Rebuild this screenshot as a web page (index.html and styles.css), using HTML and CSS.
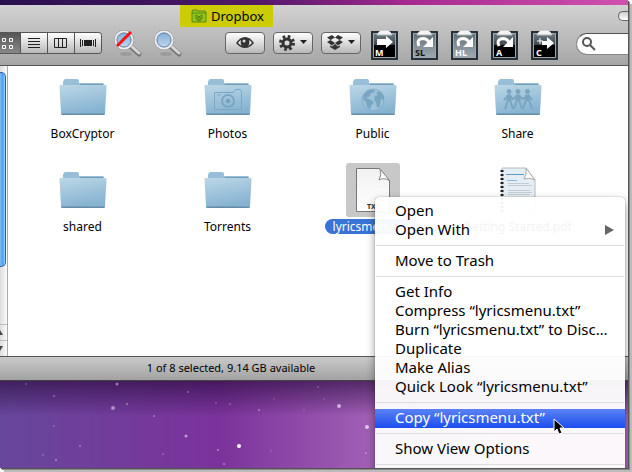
FILE: index.html
```html
<!DOCTYPE html>
<html lang="en">
<head>
    <meta charset="UTF-8">
    <meta name="viewport" content="width=device-width, initial-scale=1.0">
    <title>Dropbox</title>
    <link rel="stylesheet" href="styles.css">
</head>
<body>
    <!-- shared shapes -->
    <svg class="defs" width="0" height="0" aria-hidden="true">
        <defs>
            <linearGradient id="folder-front" x1="0" y1="0" x2="0.3" y2="1">
                <stop offset="0" stop-color="#bcd7e6"/>
                <stop offset="1" stop-color="#86b3d2"/>
            </linearGradient>
            <linearGradient id="lens" x1="0" y1="0" x2="0" y2="1">
                <stop offset="0" stop-color="#7ea9d3"/>
                <stop offset="1" stop-color="#c3dcf2"/>
            </linearGradient>
            <linearGradient id="clip-dark" x1="0" y1="0" x2="0" y2="1">
                <stop offset="0" stop-color="#77858d"/>
                <stop offset="0.5" stop-color="#39434a"/>
                <stop offset="0.5" stop-color="#000"/>
            </linearGradient>
            <linearGradient id="clip-light" x1="0" y1="0" x2="0" y2="1">
                <stop offset="0" stop-color="#5d6b73"/>
                <stop offset="1" stop-color="#a4afb5"/>
            </linearGradient>
            <linearGradient id="paper" x1="0" y1="0" x2="0" y2="1">
                <stop offset="0" stop-color="#f1f1f1"/>
                <stop offset="1" stop-color="#fff"/>
            </linearGradient>
            <symbol id="folder" viewBox="0 0 48 36">
                <path d="M4 8V3q0-1 1-2l1-1h12q2 0 2 2v2h24q1 0 1 2v4H3z" fill="#98bfd7"/>
                <path d="M21 5h23v1H21z" fill="#6f9cb9"/>
                <path d="M1 6h45q2 0 1.500 2L46 34q0 2-1.500 2h-41Q2 36 2 34L.500 8Q.500 6 1 6z" fill="url(#folder-front)"/>
                <path d="M2 34.500h44q0 1.500-2 1.500H4q-2 0-2-1.500z" fill="#668ba6"/>
            </symbol>
            <symbol id="magnifier" viewBox="0 0 30 30">
                <ellipse cx="13" cy="25" rx="6" ry="2" fill="#8a8a8a" opacity="0.5"/>
                <path d="M17 17l9 8" stroke="#777" stroke-width="5" stroke-linecap="round"/>
                <path d="M17 16l9 8" stroke="#d6d6d6" stroke-width="3" stroke-linecap="round"/>
                <circle cx="11" cy="11" r="8.500" fill="url(#lens)" stroke="#8b9095" stroke-width="3"/>
                <circle cx="11" cy="11" r="8.500" fill="none" stroke="#edf0f2" stroke-width="2"/>
                <circle cx="11" cy="11" r="7" fill="none" stroke="#6f90b0" stroke-width="1"/>
            </symbol>
            <symbol id="clip" viewBox="0 0 27 31">
                <path d="M1 3h25v27H1z" fill="none" stroke="#27313a" stroke-width="2"/>
                <path d="M2.500 4.500h22v24h-22z" fill="none" stroke="#9ca6ac"/>
                <path d="M6 5l2-2 2-2h7l2 2 2 2v1H6z" fill="#f4f4f4" stroke="#b4babd"/>
            </symbol>
            <symbol id="redo" viewBox="0 0 17 12">
                <path d="M3 10Q0 3 7 2.500q4 0 6 4" fill="none" stroke="#fff" stroke-width="3"/>
                <path d="M17 1v10H7z" fill="#fff"/>
            </symbol>
        </defs>
    </svg>

    <div class="desktop">
        <svg class="stars" viewBox="0 0 375 88" width="375" height="88" fill="#e3c8f0" aria-hidden="true">
            <circle cx="26" cy="4" r="1" opacity="0.3"/>
            <circle cx="117" cy="4" r="1.500" opacity="0.5"/>
            <circle cx="54" cy="16" r="1" opacity="0.4"/>
            <circle cx="113" cy="28" r="2" opacity="0.6"/>
            <circle cx="127" cy="24" r="1" opacity="0.5"/>
            <circle cx="154" cy="36" r="1" opacity="0.5"/>
            <circle cx="188" cy="12" r="1" opacity="0.4"/>
            <circle cx="54" cy="46" r="1" opacity="0.3"/>
            <circle cx="186" cy="56" r="1.500" opacity="0.7"/>
            <circle cx="80" cy="66" r="1" opacity="0.5"/>
            <circle cx="43" cy="75" r="1" opacity="0.3"/>
            <circle cx="56" cy="80" r="1" opacity="0.5"/>
            <circle cx="163" cy="74" r="1" opacity="0.3"/>
            <circle cx="216" cy="23" r="1" opacity="0.3"/>
            <circle cx="230" cy="24" r="1" opacity="0.3"/>
            <circle cx="259" cy="30" r="1" opacity="0.5"/>
            <circle cx="274" cy="19" r="1" opacity="0.2"/>
            <circle cx="304" cy="30" r="1" opacity="0.2"/>
            <circle cx="318" cy="7" r="1" opacity="0.3"/>
            <circle cx="324" cy="19" r="1" opacity="0.2"/>
            <circle cx="339" cy="26" r="2" opacity="0.8"/>
            <circle cx="367" cy="47" r="2"/>
            <circle cx="239" cy="66" r="2" fill="#fff"/>
            <circle cx="218" cy="70" r="1" opacity="0.6"/>
            <circle cx="224" cy="84" r="1" opacity="0.5"/>
            <circle cx="271" cy="71" r="1" opacity="0.2"/>
            <circle cx="366" cy="73" r="1" opacity="0.5"/>
        </svg>

        <main class="finder">
            <header class="chrome">
                <div class="titlebar">
                    <h1 class="title">
                        <svg width="16" height="14" viewBox="0 0 16 14" aria-hidden="true">
                            <path d="M1 13V2l1-1h4l1 1h7l1 1v10z" fill="#92c51c" stroke="#5d8a12"/>
                            <path d="M1 4h14" stroke="#5d8a12"/>
                            <path d="M5 6l3 2-3 2zM11 6L8 8l3 2zM6 11l2-1 2 1-2 1z" fill="none" stroke="#55800f"/>
                        </svg>
                        Dropbox
                    </h1>
                    <button class="pill" aria-label="Toggle toolbar"></button>
                </div>
                <div class="toolbar">
                    <div class="views">
                        <button class="view active" aria-label="Icon view">
                            <svg width="14" height="14" viewBox="0 0 14 14" fill="none" stroke="#fff" stroke-width="1">
                                <path d="M2.500 2.500h3v3h-3zM9.500 2.500h3v3h-3zM2.500 9.500h3v3h-3zM9.500 9.500h3v3h-3z"/>
                            </svg>
                        </button>
                        <button class="view" aria-label="List view">
                            <svg width="12" height="11" viewBox="0 0 12 11" stroke="#222">
                                <path d="M0 .500h12M0 3.500h12M0 6.500h12M0 9.500h12"/>
                            </svg>
                        </button>
                        <button class="view" aria-label="Column view">
                            <svg width="14" height="11" viewBox="0 0 14 11" fill="none" stroke="#222">
                                <path d="M.500 .500h12v9H.500zM4.500 0v10M8.500 0v10"/>
                            </svg>
                        </button>
                        <button class="view" aria-label="Cover Flow view">
                            <svg width="16" height="11" viewBox="0 0 16 11" stroke="#222">
                                <path d="M4 2h8v6H4z" fill="#222" stroke="none"/>
                                <path d="M.500 1v8M2.500 2v6M13.500 2v6M15.500 1v8"/>
                            </svg>
                        </button>
                    </div>
                    <div class="lenses">
                        <button class="plain" aria-label="Hide hidden files">
                            <svg width="30" height="30" viewBox="0 0 30 30">
                                <use href="#magnifier"/>
                                <path d="M4 17L18 3" stroke="#f31414" stroke-width="3"/>
                            </svg>
                        </button>
                        <button class="plain" aria-label="Find">
                            <svg width="30" height="30"><use href="#magnifier"/></svg>
                        </button>
                    </div>
                    <div class="actions">
                        <button class="action" aria-label="Quick Look">
                            <svg width="18" height="12" viewBox="0 0 18 12">
                                <path d="M0 6Q4 0 9 0t9 6q-4 5-9 5T0 6z" fill="#333"/>
                                <path d="M2 6q1-2 3-3-1 4 1 6-2-1-4-3zM16 6q-1-2-3-3 1 4-1 6 2-1 4-3z" fill="#e4e4e4"/>
                                <circle cx="8" cy="4" r="1.500" fill="#ddd"/>
                            </svg>
                        </button>
                        <button class="action" aria-label="Action">
                            <svg width="28" height="16" viewBox="0 0 28 16">
                                <circle cx="8" cy="8" r="4" fill="none" stroke="#333" stroke-width="3"/>
                                <circle cx="8" cy="8" r="6.500" fill="none" stroke="#333" stroke-width="3" stroke-dasharray="2.600 2.500"/>
                                <path d="M21 5h7l-3.500 4z" fill="#222"/>
                            </svg>
                        </button>
                        <button class="action" aria-label="Dropbox">
                            <svg width="28" height="16" viewBox="0 0 28 16">
                                <path d="M5 0l3 2.500L3.500 5 0 2.500zM11 0L8 2.500 12.500 5 16 2.500zM0 7l3.500-2L8 8l-3 2.500zM16 7l-3.500-2L8 8l3 2.500zM8 9l3 2.500 2-1V12l-5 3-5-3v-1.500l2 1z" fill="#333"/>
                                <path d="M21 5h7l-3.500 4z" fill="#222"/>
                            </svg>
                        </button>
                    </div>
                    <div class="scripts">
                        <button class="plain" aria-label="Move">
                            <svg width="27" height="31" viewBox="0 0 27 31">
                                <path d="M1 3h25v27H1z" fill="url(#clip-dark)"/>
                                <use href="#clip"/>
                                <path d="M6 10h9V7l7 6-7 6v-3H6z" fill="#fff"/>
                                <text class="clip-text" x="4" y="27">M</text>
                            </svg>
                        </button>
                        <button class="plain" aria-label="Symbolic link">
                            <svg width="27" height="31" viewBox="0 0 27 31">
                                <path d="M1 3h25v27H1z" fill="url(#clip-light)"/>
                                <use href="#clip"/>
                                <use href="#redo" x="5" y="7" width="17" height="12"/>
                                <text class="clip-text dark" x="4" y="27">SL</text>
                            </svg>
                        </button>
                        <button class="plain" aria-label="Hard link">
                            <svg width="27" height="31" viewBox="0 0 27 31">
                                <path d="M1 3h25v27H1z" fill="url(#clip-light)"/>
                                <use href="#clip"/>
                                <use href="#redo" x="5" y="7" width="17" height="12"/>
                                <text class="clip-text" x="4" y="27">HL</text>
                            </svg>
                        </button>
                        <button class="plain" aria-label="Alias">
                            <svg width="27" height="31" viewBox="0 0 27 31">
                                <path d="M1 3h25v27H1z" fill="url(#clip-dark)"/>
                                <use href="#clip"/>
                                <use href="#redo" x="5" y="7" width="17" height="12"/>
                                <text class="clip-text" x="5" y="27">A</text>
                            </svg>
                        </button>
                        <button class="plain" aria-label="Copy">
                            <svg width="27" height="31" viewBox="0 0 27 31">
                                <path d="M1 3h25v27H1z" fill="url(#clip-dark)"/>
                                <use href="#clip"/>
                                <path d="M11 12h5V8l7 6-7 6v-4h-5z" fill="#fff"/>
                                <path d="M6 12h6M9 9v6" stroke="#fff"/>
                                <text class="clip-text" x="5" y="27">C</text>
                            </svg>
                        </button>
                    </div>
                    <label class="search">
                        <svg width="14" height="14" viewBox="0 0 14 14" fill="none" stroke="#555" stroke-width="2">
                            <circle cx="5" cy="5" r="4"/>
                            <path d="M8 8l5 5"/>
                        </svg>
                        <input type="search" aria-label="Search">
                    </label>
                </div>
            </header>

            <div class="content">
                <div class="scrollbar" aria-hidden="true">
                    <div class="thumb"></div>
                    <div class="arrow"><svg width="3" height="5"><path d="M0 0l3 5H0z" fill="#444"/></svg></div>
                    <div class="arrow"><svg width="3" height="5"><path d="M0 0h3L0 5z" fill="#444"/></svg></div>
                </div>
                <ul class="files">
                    <li class="file">
                        <span class="thumbnail"><svg width="48" height="36"><use href="#folder"/></svg></span>
                        <span class="name">BoxCryptor</span>
                    </li>
                    <li class="file">
                        <span class="thumbnail">
                            <svg width="48" height="36" viewBox="0 0 48 36">
                                <use href="#folder"/>
                                <g fill="none" stroke="#7ba7c4">
                                    <path d="M10.500 13.500h19l2-3h5l1 3v17h-27z"/>
                                    <circle cx="24" cy="22" r="6" stroke-width="2"/>
                                    <circle cx="24" cy="22" r="2" fill="#6f9fbe"/>
                                    <path d="M13 16h4"/>
                                </g>
                            </svg>
                        </span>
                        <span class="name">Photos</span>
                    </li>
                    <li class="file">
                        <span class="thumbnail">
                            <svg width="48" height="36" viewBox="0 0 48 36">
                                <use href="#folder"/>
                                <circle cx="24" cy="21" r="11" fill="#9cc1d8" stroke="#84afca"/>
                                <path d="M15 15q5-5 10-4l1 2-4 1-1 3-4 2 5 2 3 2-3 4-1 4-3-3-1-5-3-3zM27 14l4-2q5 4 4 9l-3-1-1 7-3 2-1-6-2-2 1-4 3-1z" fill="#78a5c2"/>
                            </svg>
                        </span>
                        <span class="name">Public</span>
                    </li>
                    <li class="file">
                        <span class="thumbnail">
                            <svg width="48" height="36" viewBox="0 0 48 36">
                                <use href="#folder"/>
                                <g fill="#7ba5c0" stroke="#7ba5c0">
                                    <circle cx="15" cy="12.500" r="2"/>
                                    <circle cx="24" cy="12.500" r="2"/>
                                    <circle cx="33.500" cy="12.500" r="2"/>
                                    <path d="M13 16h4v6h-4zM22 16h4v6h-4zM31.500 16h4v6h-4z"/>
                                    <path fill="none" stroke-width="2" d="M10 21l4-4M16 17l3 3 4-3M25 17l4 3 4-3M35 17l3 4M14 21l-3 9M16 21l3 9M23 21l-3 9M25 21l3 9M32 21l-3 9M35 21l3 9"/>
                                </g>
                            </svg>
                        </span>
                        <span class="name">Share</span>
                    </li>
                    <li class="file">
                        <span class="thumbnail"><svg width="48" height="36"><use href="#folder"/></svg></span>
                        <span class="name">shared</span>
                    </li>
                    <li class="file">
                        <span class="thumbnail"><svg width="48" height="36"><use href="#folder"/></svg></span>
                        <span class="name">Torrents</span>
                    </li>
                    <li class="file selected">
                        <span class="thumbnail">
                            <svg width="36" height="46" viewBox="0 0 36 46">
                                <path d="M1.500 1.500h23l10 12v31h-33z" fill="url(#paper)" stroke="#777"/>
                                <path d="M25 2q2 6-1 11 5-3 11 1z" fill="#fff" stroke="#888"/>
                                <text class="doc-type" x="12" y="42">TXT</text>
                            </svg>
                        </span>
                        <span class="name">lyricsmenu.txt</span>
                    </li>
                    <li class="file">
                        <span class="thumbnail">
                            <svg width="36" height="46" viewBox="0 0 36 46">
                                <path d="M2 1h24l9 12v32H2z" fill="#e5eef4" stroke="#b5bcc0"/>
                                <path d="M2 3v42" stroke="#222" stroke-width="3" stroke-dasharray="2 2"/>
                                <path d="M6 7.500h18" stroke="#5a9bcd"/>
                                <path d="M7 13.500h10" stroke="#8fb9da"/>
                                <path d="M8 16.500h21M8 18.500h24M8 23.500h22M8 25.500h24M8 27.500h22M8 33.500h20" stroke="#c3ccd2"/>
                                <path d="M26 1q1 7-2 11 6-2 11 1z" fill="#fff" stroke="#aaa"/>
                            </svg>
                        </span>
                        <span class="name">Getting Started.pdf</span>
                    </li>
                </ul>
            </div>

            <footer class="status">
                <span>1 of 8 selected, 9.14 GB available</span>
            </footer>
        </main>

        <div class="menu" role="menu">
            <button class="item" role="menuitem">Open</button>
            <button class="item" role="menuitem">Open With
                <svg width="9" height="10"><path d="M0 0l9 5-9 5z" fill="#666"/></svg>
            </button>
            <hr>
            <button class="item" role="menuitem">Move to Trash</button>
            <hr>
            <button class="item" role="menuitem">Get Info</button>
            <button class="item" role="menuitem">Compress “lyricsmenu.txt”</button>
            <button class="item" role="menuitem">Burn “lyricsmenu.txt” to Disc…</button>
            <button class="item" role="menuitem">Duplicate</button>
            <button class="item" role="menuitem">Make Alias</button>
            <button class="item" role="menuitem">Quick Look “lyricsmenu.txt”</button>
            <hr>
            <button class="item highlighted" role="menuitem">Copy “lyricsmenu.txt”</button>
            <hr>
            <button class="item" role="menuitem">Show View Options</button>
            <hr>
        </div>

        <svg class="cursor" width="12" height="18" viewBox="0 0 12 18" aria-hidden="true">
            <path d="M1 1v13l3-3 2 5 3-1-2-5h4z" fill="#000" stroke="#fff"/>
        </svg>
    </div>
</body>
</html>
```

FILE: styles.css
```css
* {
    box-sizing: border-box;
}

body {
    margin: 0;
    height: 100vh;
    padding: 0 4px 4px 0;
    overflow: hidden;
    background: #fff;
    font-family: "Lucida Grande", "Noto Sans", sans-serif;
    color: #000;
}

button {
    margin: 0;
    padding: 0;
    border: 0;
    background: none;
    font: inherit;
    color: inherit;
}

svg {
    display: block;
}

.defs {
    position: absolute;
}

.desktop {
    position: relative;
    height: 100%;
    padding-top: 5px;
    overflow: hidden;
    box-shadow: 1px 1px 0 #555, 2px 2px 0 #888, 4px 4px 1px #bbb;
    background:
        linear-gradient(to right, #28104f, #4f1767 40%, #a52990 65%, #d052ae) top / 100% 5px no-repeat,
        linear-gradient(rgba(40, 10, 60, 0.65), rgba(40, 10, 60, 0) 36px) 0 380px no-repeat,
        linear-gradient(to right, #67479b, #7b329b 35%, #a262b6 60%, #a866b4);
}

/* stars over the wallpaper */
.stars {
    position: absolute;
    left: 0;
    bottom: 0;
}

/* window */
.finder {
    border-bottom: 1px solid #444;
}

.chrome {
    border-bottom: 1px solid #555;
    background: linear-gradient(#d2d2d2, #a6a6a6);
}

.titlebar {
    display: flex;
    justify-content: space-between;
    padding-left: 180px;
    height: 22px;
}

.title {
    display: flex;
    align-items: center;
    gap: 4px;
    margin: 0;
    padding: 0 9px 0 11px;
    background: #cccc05;
    font-size: 13px;
    line-height: 22px;
    font-weight: 400;
}

.pill {
    width: 10px;
    height: 10px;
    margin-top: 6px;
    border: 1px solid #666;
    border-right: 0;
    border-radius: 5px 0 0 5px;
    background: linear-gradient(#ccc, #fff);
}

.toolbar {
    display: flex;
    align-items: flex-start;
    height: 38px;
    padding-top: 2px;
}

.views,
.lenses,
.actions,
.scripts {
    display: flex;
    flex-shrink: 0;
}

.views {
    margin-top: 3px;
    border: 1px solid #555;
    border-left: 0;
    border-radius: 0 4px 4px 0;
    overflow: hidden;
}

.view {
    display: flex;
    align-items: center;
    justify-content: center;
    width: 27px;
    height: 20px;
    border-left: 1px solid #555;
    background: linear-gradient(#fff, #b8b8b8);
}

.view.active {
    width: 20px;
    justify-content: flex-start;
    border-left: 0;
    background: linear-gradient(#555, #888);
}

.lenses {
    gap: 10px;
    margin-left: 11px;
}

.actions {
    gap: 8px;
    margin: 3px 0 0 42px;
}

.action {
    display: flex;
    align-items: center;
    justify-content: center;
    width: 40px;
    height: 22px;
    border: 1px solid #666;
    border-radius: 4px;
    background: linear-gradient(#fff, #b8b8b8);
}

.scripts {
    gap: 13px;
    margin-left: 10px;
}

.clip-text {
    font: bold 9px "Noto Sans", sans-serif;
    fill: #fff;
}

.clip-text.dark {
    fill: #111;
}

.search {
    display: flex;
    flex: 1;
    align-items: center;
    gap: 4px;
    height: 22px;
    margin: 4px 0 0 18px;
    padding-left: 5px;
    border: 1px solid #888;
    border-top-color: #555;
    border-right: 0;
    border-radius: 11px 0 0 11px;
    background: #fff;
}

.search svg {
    flex-shrink: 0;
}

.search input {
    flex: 1;
    width: 0;
    min-width: 0;
    padding: 0;
    border: 0;
    outline: 0;
    background: none;
    font: inherit;
}

/* icon view */
.content {
    display: flex;
    height: 290px;
    background: #fff;
}

.scrollbar {
    display: flex;
    flex-direction: column;
    width: 8px;
    padding-top: 6px;
    border-right: 1px solid #aaa;
    background: linear-gradient(to right, #ddd, #fafafa);
}

.thumb {
    width: 6px;
    height: 195px;
    margin-bottom: auto;
    border: 1px solid #3a5d96;
    border-left: 0;
    border-radius: 0 5px 5px 0;
    background: linear-gradient(to right, #79baf5, #4c9ff2 60%, #9fdcff);
}

.arrow {
    display: flex;
    align-items: center;
    height: 16px;
    border-top: 1px solid #bbb;
}

.files {
    flex: 1;
    display: grid;
    grid-template-columns: repeat(auto-fill, 145px);
    grid-auto-rows: 93px;
    margin: 0;
    padding: 4px 0 0 2px;
    list-style: none;
}

.file {
    display: flex;
    flex-direction: column;
    align-items: center;
    gap: 2px;
}

.thumbnail {
    display: flex;
    align-items: center;
    justify-content: center;
    width: 54px;
    height: 54px;
    border-radius: 3px;
}

.name {
    padding: 0 8px;
    border-radius: 8px;
    font-size: 12px;
    line-height: 15px;
}

.selected .thumbnail {
    background: #c8c8c8;
}

.selected .name {
    background: #3874d7;
    color: #fff;
}

.doc-type {
    font: bold 7px "Noto Sans", sans-serif;
    fill: #333;
}

.status {
    height: 24px;
    padding-right: 166px;
    border-top: 1px solid #555;
    background: linear-gradient(#cacaca, #a2a2a2);
    font-size: 11px;
    line-height: 22px;
    text-align: center;
}

/* context menu */
.menu {
    position: absolute;
    top: 197px;
    right: 3px;
    width: 250px;
    padding: 5px 0;
    border-radius: 5px;
    background: rgba(255, 255, 255, 0.95);
    box-shadow: 0 4px 10px rgba(0, 0, 0, 0.4), 0 0 1px rgba(0, 0, 0, 0.6);
    font-size: 15px;
    line-height: 17px;
}

.item {
    display: flex;
    align-items: center;
    justify-content: space-between;
    width: 100%;
    height: 19px;
    padding: 0 11px 2px 20px;
    text-align: left;
    white-space: nowrap;
}

.item.highlighted {
    background: linear-gradient(#5b82f3, #1c4ef0);
    color: #fff;
}

.menu hr {
    height: 1px;
    margin: 5px 1px 6px;
    border: 0;
    background: #ddd;
}

.cursor {
    position: absolute;
    top: 418px;
    left: 553px;
}
```
